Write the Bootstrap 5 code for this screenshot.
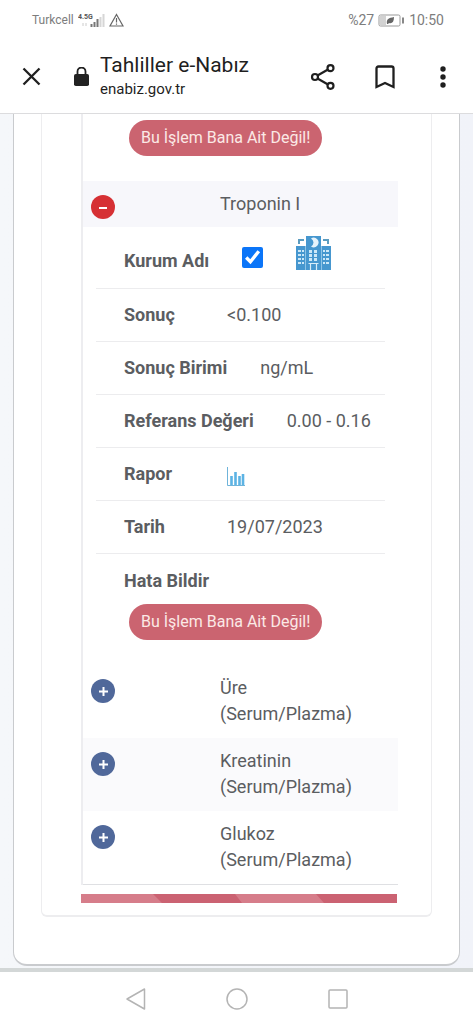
<!DOCTYPE html>
<html lang="tr">
<head>
<meta charset="utf-8">
<meta name="viewport" content="width=device-width, initial-scale=1">
<title>Tahliller e-Nabız</title>
<link href="https://cdn.jsdelivr.net/npm/bootstrap@5.3.0/dist/css/bootstrap.min.css" rel="stylesheet">
<style>
  body { font-family: Roboto, "Noto Sans", sans-serif; font-size: 18px; line-height: 26px; color: #5b5d61; background: #fff; }
  svg { display: block; flex: none; }
  .status-bar { height: 40px; padding: 0 29px 0 32px; font-size: 14px; line-height: 20px; color: #7d7d7d; }
  .status-bar .carrier { font-size: 12px; }
  .browser-bar { height: 73px; padding: 0 21px 0 22px; color: #1f1f1f; }
  .browser-bar .page-name { font-size: 21px; line-height: 25px; }
  .browser-bar .page-host { font-size: 15px; line-height: 22px; }
  .browser-bar button, .phone-nav button { background: none; border: 0; padding: 0; color: inherit; }
  .site-info { gap: 11px; margin-left: 33px; }
  .tools { gap: 39px; }
  .page-body { background: linear-gradient(90deg, #f5f7fa, #f1f3f9); border-top: 1px solid #dcdcde; border-bottom: 4px solid #d3d7d7; padding: 0 13px 2px; }
  .sheet { background: #fff; border: 1px solid #c9cbce; border-width: 0 1px 2px; border-radius: 0 0 14px 14px; padding: 0 27px 47px; }
  .panel { border: 1px solid #ededef; border-width: 0 1px 2px; border-radius: 0 0 6px 6px; padding: 0 33px 12px 39px; }
  .results { width: 100%; table-layout: fixed; border-left: 2px solid #ededf0; border-bottom: 1px solid #dfe0e3; }
  .results td { padding: 0; vertical-align: top; }
  .results .toggle-col { width: 138px; }
  .results .parent-row td { height: 73px; padding-top: 10px; }
  .results .open-row td { height: 46px; padding-top: 10px; background: #f7f7fb; }
  .results .striped td { background: #fafafc; }
  .toggle-btn { display: block; width: 24px; height: 24px; margin: 4px 0 0 8px; padding: 0; border: 0; border-radius: 50%; background: #50689a; }
  .toggle-btn.is-open { background: #d63034; }
  .results .previous td { height: 67px; padding: 6px 0 0 46px; }
  .results .child td { padding: 0 13px; }
  .detail { height: 53px; padding: 0 0 0 28px; gap: 33px; border-bottom: 1px solid #ececee; }
  .detail.first { height: 62px; padding-top: 7px; }
  .detail .key { min-width: 70px; font-weight: 700; }
  .report { padding: 14px 0 25px 28px; }
  .report .key { display: block; font-weight: 700; margin-bottom: 10px; }
  .report .pill { margin-left: 5px; }
  .pill { display: block; height: 36px; padding: 0 12px; border: 0; border-radius: 18px; background: #cb6470; color: #fbe9e6; font-size: 16px; line-height: 34px; white-space: nowrap; }
  .pick { width: 21px; height: 21px; accent-color: #0b75f8; }
  .stripe { margin: 9px 1px 0 0; }
  .phone-nav { height: 54px; color: #b4b4b4; gap: 80px; }
</style>
</head>
<body>
<header>
  <div class="status-bar d-flex align-items-center justify-content-between">
    <div class="d-flex align-items-center">
      <span class="carrier">Turkcell</span>
      <svg class="ms-1" width="27" height="18" viewBox="0 0 27 18" aria-label="4.5G">
        <text x="0" y="8" font-size="7" font-weight="700" font-family="Roboto, sans-serif" fill="#555">4.5G</text>
        <path d="M5 12v3M8 12v3" stroke="#ccc"/>
        <path d="M13.500 13v3M16.500 11v5M19.500 8v8" stroke="#777" stroke-width="2"/>
        <path d="M22.500 6v10M25.500 3v13" stroke="#d6d6d6" stroke-width="2"/>
      </svg>
      <svg class="ms-1" width="15" height="14" viewBox="0 0 15 14" fill="none" stroke="#666" stroke-width="1.200"><path d="M7.500 1.500 14 13H1zM7.500 5v4.500M7.500 10.500v1.200"/></svg>
    </div>
    <div class="d-flex align-items-center">
      <span>%27</span>
      <svg class="mx-1" width="27" height="13" viewBox="0 0 27 13"><rect x="1" y="1" width="21" height="11" rx="1.500" fill="none" stroke="#999"/><path d="M2 2h6v9H2z" fill="#d2d2d2"/><path d="M9 10c-1-5 2-6 7-7 0 5-2 7-5 6l-1 1z" fill="#666"/><path d="M24 3.500h2v6h-2z" fill="#888"/></svg>
      <span>10:50</span>
    </div>
  </div>
  <div class="browser-bar d-flex align-items-center">
    <button type="button" aria-label="Kapat"><svg width="19" height="19" viewBox="0 0 19 19" fill="none" stroke="currentColor" stroke-width="2.300"><path d="M1.500 1.500l16 16M17.500 1.500l-16 16"/></svg></button>
    <div class="site-info d-flex align-items-center flex-grow-1">
      <svg width="15" height="19" viewBox="0 0 15 19"><path d="M3.500 8V4.500a4 4 0 0 1 8 0V8" fill="none" stroke="#222" stroke-width="1.800"/><rect y="7" width="15" height="12" rx="1.800" fill="#222"/></svg>
      <div class="pb-1 pt-1">
        <div class="page-name">Tahliller e-Nabız</div>
        <div class="page-host">enabiz.gov.tr</div>
      </div>
    </div>
    <div class="tools d-flex align-items-center">
      <button type="button" aria-label="Paylaş"><svg width="26" height="26" viewBox="0 0 26 26" fill="none" stroke="currentColor" stroke-width="2.200"><path d="M7.500 11.500 18 5.500M7.500 14.500 18 20.500"/><circle cx="5" cy="13" r="3"/><circle cx="20.500" cy="4.200" r="3"/><circle cx="20.500" cy="21.800" r="3"/></svg></button>
      <button type="button" aria-label="Yer işareti"><svg width="20" height="24" viewBox="0 0 20 24" fill="none" stroke="currentColor" stroke-width="2.300"><path d="M1.500 22V3.500Q1.500 1.500 3.500 1.500h13q2 0 2 2V22L10 18z"/></svg></button>
      <button type="button" aria-label="Menü"><svg width="18" height="22" viewBox="0 0 18 22" fill="currentColor"><circle cx="9" cy="3" r="2.700"/><circle cx="9" cy="11" r="2.700"/><circle cx="9" cy="19" r="2.700"/></svg></button>
    </div>
  </div>
</header>
<main class="page-body">
  <div class="sheet">
    <div class="panel">
      <table class="results">
        <colgroup><col class="toggle-col"><col></colgroup>
        <tbody>
          <tr class="previous"><td colspan="2"><button type="button" class="pill">Bu İşlem Bana Ait Değil!</button></td></tr>
          <tr class="open-row">
            <td><button type="button" class="toggle-btn is-open" aria-label="Daralt"><svg width="24" height="24" viewBox="0 0 24 24"><path d="M8 13h8" stroke="#fff" stroke-width="2"/></svg></button></td>
            <td>Troponin I</td>
          </tr>
          <tr class="child"><td colspan="2">
            <ul class="list-unstyled mb-0">
              <li class="detail first d-flex align-items-center">
                <label class="key" for="kurum">Kurum Adı</label>
                <input class="pick mt-0 mb-2" type="checkbox" id="kurum" checked>
                <svg class="mb-3" width="35" height="36" viewBox="0 0 35 36" aria-label="Hastane">
                  <path d="M0 11h9v24H0zM10 1h15v34H10zM26 11h9v24h-9z" fill="#4697cf"/>
                  <path d="M9 11h1v24H9zM25 11h1v24h-1z" fill="#8fc4e6"/>
                  <path d="M3 9V5h5M32 9V5h-5" fill="none" stroke="#5b9cc0" stroke-width="2"/>
                  <path d="M15 3.500a4.800 4.800 0 1 1 0 8 5 5 0 0 0 2.500-4 5 5 0 0 0-2.500-4z" fill="#e6f3fb"/>
                  <path d="M13 15h3v3h-3zM18 15h3v3h-3zM13 19h3v3h-3zM18 19h3v3h-3zM13 23h3v3h-3zM18 23h3v3h-3zM2 15h3v2H2zM6 15h2v2H6zM2 19h3v2H2zM6 19h2v2H6zM2 23h3v2H2zM6 23h2v2H6zM2 27h3v2H2zM6 27h2v2H6zM27 15h2v2h-2zM30 15h3v2h-3zM27 19h2v2h-2zM30 19h3v2h-3zM27 23h2v2h-2zM30 23h3v2h-3zM27 27h2v2h-2zM30 27h3v2h-3z" fill="#cce7f7"/>
                  <path d="M12.500 28.500h10M14.500 29v6M20.500 29v6" stroke="#d8edf9" stroke-width="1.200"/>
                </svg>
              </li>
              <li class="detail d-flex align-items-center"><span class="key">Sonuç</span><span>&lt;0.100</span></li>
              <li class="detail d-flex align-items-center"><span class="key">Sonuç Birimi</span><span>ng/mL</span></li>
              <li class="detail d-flex align-items-center"><span class="key">Referans Değeri</span><span>0.00 - 0.16</span></li>
              <li class="detail d-flex align-items-center"><span class="key">Rapor</span>
                <a href="#" class="pt-1" aria-label="Rapor grafiği"><svg width="18" height="19" viewBox="0 0 18 19" fill="none"><path d="M.5 0v18.500H18" stroke="#6fb4da"/><path d="M4.500 18V9M8.500 18V5M12.500 18V9M16 18V7" stroke="#5cb3e4" stroke-width="2.600"/></svg></a></li>
              <li class="detail d-flex align-items-center"><span class="key">Tarih</span><span>19/07/2023</span></li>
              <li class="report"><span class="key">Hata Bildir</span><button type="button" class="pill">Bu İşlem Bana Ait Değil!</button></li>
            </ul>
          </td></tr>
          <tr class="parent-row">
            <td><button type="button" class="toggle-btn" aria-label="Genişlet"><svg width="24" height="24" viewBox="0 0 24 24"><path d="M8 12.500h9M12.500 8v9" stroke="#fff" stroke-width="2"/></svg></button></td>
            <td>Üre<br>(Serum/Plazma)</td>
          </tr>
          <tr class="parent-row striped">
            <td><button type="button" class="toggle-btn" aria-label="Genişlet"><svg width="24" height="24" viewBox="0 0 24 24"><path d="M8 12.500h9M12.500 8v9" stroke="#fff" stroke-width="2"/></svg></button></td>
            <td>Kreatinin<br>(Serum/Plazma)</td>
          </tr>
          <tr class="parent-row">
            <td><button type="button" class="toggle-btn" aria-label="Genişlet"><svg width="24" height="24" viewBox="0 0 24 24"><path d="M8 12.500h9M12.500 8v9" stroke="#fff" stroke-width="2"/></svg></button></td>
            <td>Glukoz<br>(Serum/Plazma)</td>
          </tr>
        </tbody>
      </table>
      <div class="stripe"><svg width="100%" height="9" viewBox="0 0 316 9" preserveAspectRatio="none"><path d="M0 0h316v9H0z" fill="#cb6272"/><path d="M0 0h72l9 9H0zM154 0h81l8 9h-82z" fill="#d67d8a"/></svg></div>
    </div>
  </div>
</main>
<nav class="phone-nav d-flex align-items-center justify-content-center">
  <button type="button" aria-label="Geri"><svg width="20" height="22" viewBox="0 0 20 22" fill="none" stroke="currentColor" stroke-width="1.500" stroke-linejoin="round"><path d="M18.500 1v20L1 11z"/></svg></button>
  <button type="button" aria-label="Ana ekran"><svg width="22" height="22" viewBox="0 0 22 22" fill="none" stroke="currentColor" stroke-width="1.500"><circle cx="11" cy="11" r="10"/></svg></button>
  <button type="button" aria-label="Son uygulamalar"><svg width="20" height="20" viewBox="0 0 20 20" fill="none" stroke="currentColor" stroke-width="1.500"><rect x="1" y="1" width="18" height="18" rx="1"/></svg></button>
</nav>
<script src="https://cdn.jsdelivr.net/npm/bootstrap@5.3.0/dist/js/bootstrap.bundle.min.js"></script>
</body>
</html>
